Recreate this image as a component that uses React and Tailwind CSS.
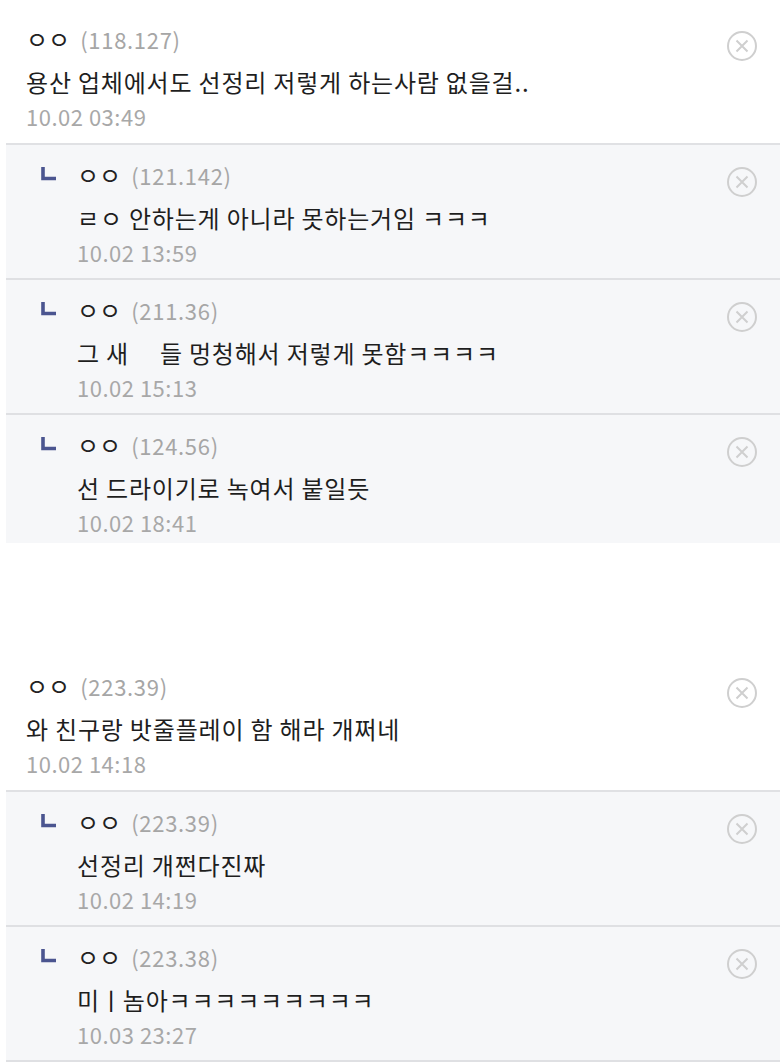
const comments = [
	{
		name: "ㅇㅇ",
		ip: "(118.127)",
		text: "용산 업체에서도 선정리 저렇게 하는사람 없을걸..",
		date: "10.02 03:49",
		replies: [
			{ name: "ㅇㅇ", ip: "(121.142)", text: "ㄹㅇ 안하는게 아니라 못하는거임 ㅋㅋㅋ", date: "10.02 13:59" },
			{ name: "ㅇㅇ", ip: "(211.36)", text: "그 새\u3000 들 멍청해서 저렇게 못함ㅋㅋㅋㅋ", date: "10.02 15:13" },
			{ name: "ㅇㅇ", ip: "(124.56)", text: "선 드라이기로 녹여서 붙일듯", date: "10.02 18:41" },
		],
	},
	{
		name: "ㅇㅇ",
		ip: "(223.39)",
		text: "와 친구랑 밧줄플레이 함 해라 개쩌네",
		date: "10.02 14:18",
		replies: [
			{ name: "ㅇㅇ", ip: "(223.39)", text: "선정리 개쩐다진짜", date: "10.02 14:19" },
			{ name: "ㅇㅇ", ip: "(223.38)", text: "미ㅣ놈아ㅋㅋㅋㅋㅋㅋㅋㅋㅋ", date: "10.03 23:27" },
		],
	},
];

function CloseIcon() {
	return (
		<svg width="32" height="32" viewBox="0 0 32 32" fill="none" className="mt-[4px]">
			<circle cx="16" cy="16" r="14" stroke="#cfcfcf" strokeWidth="2" />
			<path d="M10.5 10.5 L21.5 21.5 M21.5 10.5 L10.5 21.5" stroke="#cfcfcf" strokeWidth="2" />
		</svg>
	);
}

function ReplyMark() {
	return (
		<svg width="16" height="16" viewBox="0 0 16 16" className="mt-[4px]">
			<path d="M2 1 V12.5 H15" stroke="#4b5590" strokeWidth="3.6" fill="none" />
		</svg>
	);
}

function Body({ c }) {
	return (
		<div className="flex-1">
			<div className="flex items-center h-[30px] leading-[26px] pb-[4px]">
				<span className="text-[24px] text-[#222]">{c.name}</span>
				<span className="ml-[10px] text-[22px] tracking-[0.7px] text-[#a6a6a6]">{c.ip}</span>
			</div>
			<p className="mt-[11px] h-[30px] text-[24px] tracking-[0.8px] leading-[30px] text-[#1e1e1e] whitespace-nowrap">
				{c.text}
			</p>
			<p className="mt-[4px] h-[30px] text-[22px] tracking-[0.5px] leading-[30px] text-[#a8a8a8]">{c.date}</p>
		</div>
	);
}

export default function App() {
	return (
		<div
			className="w-[780px] min-h-[1063px] bg-white overflow-hidden"
			style={{ fontFamily: '"Noto Sans CJK KR", "Noto Sans", sans-serif' }}
		>
			{comments.map((c, i) => (
				<div key={i} className={i > 0 ? "mt-[104px]" : ""}>
					<div className="flex ml-[6px] pl-[20px] pr-[22px] pt-[26px] pb-[12px] border-b-2 border-[#e0e1e4]">
						<Body c={c} />
						<CloseIcon />
					</div>
					{c.replies.map((r, j) => (
						<div
							key={j}
							className={
								"flex ml-[6px] bg-[#f6f7f9] pl-[35px] pr-[22px] pt-[17px] " +
								(i === 0 && j === c.replies.length - 1 ? "pb-[6px]" : "pb-[11px] border-b-2 border-[#dfe0e3]")
							}
						>
							<div className="w-[36px] shrink-0">
								<ReplyMark />
							</div>
							<Body c={r} />
							<CloseIcon />
						</div>
					))}
				</div>
			))}
		</div>
	);
}
